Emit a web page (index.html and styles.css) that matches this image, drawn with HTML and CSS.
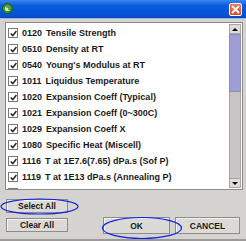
FILE: index.html
```html
<!DOCTYPE html>
<html lang="en">
<head>
  <meta charset="UTF-8" />
  <title>Select Properties</title>
  <link rel="stylesheet" href="styles.css">
</head>
<body>
<div id="dialog">
  <div id="titlebar">
    <svg class="app-icon" width="11" height="11" viewBox="0 0 11 11">
      <circle cx="5.5" cy="5.5" r="5" fill="#2f9a2a" stroke="#155c12" stroke-width="1"/>
      <circle cx="5.5" cy="5.5" r="2.6" fill="#d8e8d0"/>
      <path d="M4 4 L7 4 L7 7" stroke="#555" stroke-width="1.2" fill="none"/>
    </svg>
    <button id="closeBtn">
      <svg width="9" height="9" viewBox="0 0 9 9"><path d="M1 1 L8 8 M8 1 L1 8" stroke="#fff" stroke-width="1.8"/></svg>
    </button>
  </div>
  <div id="body">
    <div id="listbox">
      <ul id="items"></ul>
      <div class="scrollbar">
        <div class="sb-btn"><span class="arrow up"></span></div>
        <div class="sb-thumb"></div>
        <div class="sb-track"></div>
        <div class="sb-btn"><span class="arrow down"></span></div>
      </div>
    </div>
    <div class="actions">
      <div class="left-actions">
        <button class="btn small">Select All</button>
        <button class="btn small">Clear All</button>
      </div>
      <div class="right-actions">
        <button class="btn big ok">OK</button>
        <button class="btn big cancel">CANCEL</button>
      </div>
    </div>
  </div>
  <svg id="marks" width="246" height="241" viewBox="0 0 246 241">
    <ellipse cx="39.5" cy="206.5" rx="38.5" ry="7.5" fill="none" stroke="#1020e0" stroke-width="1.2"/>
    <ellipse cx="142" cy="228" rx="39.5" ry="10.5" fill="none" stroke="#1020e0" stroke-width="1.2"/>
  </svg>
</div>
<script>
(function(){
  const props = [
    ['0120','Tensile Strength'],
    ['0510','Density at RT'],
    ['0540',"Young's Modulus at RT"],
    ['1011','Liquidus Temperature'],
    ['1020','Expansion Coeff (Typical)'],
    ['1021','Expansion Coeff (0~300C)'],
    ['1029','Expansion Coeff X'],
    ['1080','Specific Heat (Miscell)'],
    ['1116','T at 1E7.6(7.65) dPa.s (Sof P)'],
    ['1119','T at 1E13 dPa.s (Annealing P)'],
    null // next row, scrolled mostly out of view
  ];
  const ul=document.getElementById('items');
  const box='<span class="check"><svg width="7" height="7" viewBox="0 0 7 7"><path d="M0.8 3.4 L2.8 5.6 L6.4 1" stroke="#222" stroke-width="1.5" fill="none"/></svg></span>';
  props.forEach(p=>{
    const li=document.createElement('li');
    li.innerHTML=p ? box+'<span class="code">'+p[0]+'</span><span class="name">'+p[1]+'</span>' : box;
    ul.appendChild(li);
  });
})();
</script>
</body>
</html>
```
FILE: styles.css
```css
* { box-sizing: border-box; margin: 0; padding: 0; }
html, body { width: 246px; height: 241px; overflow: hidden; font-family: "Liberation Sans", Arial, sans-serif; }
#dialog {
  position: relative;
  width: 246px; height: 241px;
  background: #d4d3d0;
  display: flex; flex-direction: column;
  border-bottom: 2px solid #9c9a96;
}
#titlebar {
  height: 19px; flex: none;
  display: flex; justify-content: space-between; align-items: center;
  padding: 0 4px 0 2px;
  background: linear-gradient(#3d86f0, #0a5ce0 30%, #0553d6 80%, #0447c0);
  border-bottom: 1px solid #9cb8e8;
}
.app-icon { margin-top: -1px; }
#closeBtn {
  width: 13px; height: 13px;
  display: flex; align-items: center; justify-content: center;
  background: linear-gradient(#ee7a55, #dc4b22);
  border: 1px solid #fff; border-radius: 2px;
}
#body {
  flex: 1;
  padding: 3px 3px 0 5px;
  display: flex; flex-direction: column;
}
#listbox {
  height: 168px;
  display: flex;
  background: #fff;
  border: 1px solid #8c8a86;
  overflow: hidden;
}
#items {
  flex: 1; list-style: none;
  padding-top: 2px;
  overflow: hidden;
}
#items li {
  height: 16px;
  display: flex; align-items: center;
  padding-left: 2px;
  font-size: 9px; font-weight: bold; color: #1a1a1a;
  white-space: nowrap;
}
.check {
  width: 10px; height: 10px; flex: none;
  display: flex; align-items: center; justify-content: center;
  border: 1px solid #7a7a7a; background: #fff;
  margin-right: 4px;
}
.code { margin-right: 4px; }
.scrollbar {
  width: 12px; flex: none;
  margin: 1px 1px 1px 0;
  display: flex; flex-direction: column;
  background: #c8c6c2;
}
.sb-btn {
  height: 10px; flex: none;
  display: flex; align-items: center; justify-content: center;
  background: #dedcd8;
  border: 1px solid #a8a6a2;
}
.arrow { width: 0; height: 0; border-left: 3px solid transparent; border-right: 3px solid transparent; }
.arrow.up { border-bottom: 3px solid #000; }
.arrow.down { border-top: 3px solid #000; }
.sb-thumb {
  height: 58px; flex: none;
  background: #aaaae0;
  background-image: radial-gradient(#9090cc 0.6px, transparent 0.8px);
  background-size: 2px 2px;
  border: 1px solid #8c8cc0;
}
.sb-track {
  flex: 1;
  border-left: 1px solid #a8a6a2; border-right: 1px solid #a8a6a2;
}
.actions {
  display: flex; align-items: flex-start;
  padding-top: 9px;
}
.left-actions {
  display: flex; flex-direction: column; gap: 5px;
  padding-left: 1px;
}
.right-actions {
  display: flex; gap: 5px;
  margin-left: auto; margin-right: 3px;
  margin-top: 18px;
}
.btn {
  font-family: "Liberation Sans", Arial, sans-serif;
  font-size: 8.5px; font-weight: bold; color: #1a1a1a;
  background: #dcdad6;
  border: 1px solid #8e8c88;
  box-shadow: inset 1px 1px 0 #f4f3f0;
}
.btn.small { width: 62px; height: 14px; line-height: 12px; }
.btn.big { height: 17px; }
.btn.ok { width: 67px; }
.btn.cancel { width: 65px; }
#marks { position: absolute; left: 0; top: 0; pointer-events: none; }
```
